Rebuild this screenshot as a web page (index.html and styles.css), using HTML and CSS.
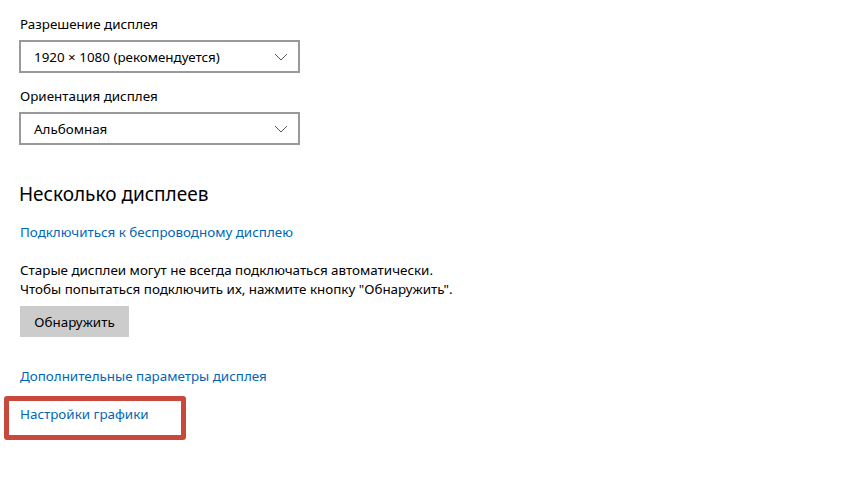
FILE: index.html
```html
<!DOCTYPE html>
<html>
<head>
<meta charset="utf-8">
<title>Дисплей</title>
<link rel="stylesheet" href="styles.css">
</head>
<body>

<div class="page">

	<div class="label lbl1">Разрешение дисплея</div>
	<div class="combo">
		<span>1920 × 1080 (рекомендуется)</span>
		<svg class="chev" width="14" height="8" viewBox="0 0 14 8"><path d="M1 1 L7 7 L13 1" fill="none" stroke="#555" stroke-width="1"/></svg>
	</div>

	<div class="label lbl2">Ориентация дисплея</div>
	<div class="combo">
		<span>Альбомная</span>
		<svg class="chev" width="14" height="8" viewBox="0 0 14 8"><path d="M1 1 L7 7 L13 1" fill="none" stroke="#555" stroke-width="1"/></svg>
	</div>

	<h2 class="hdr">Несколько дисплеев</h2>

	<a class="lnk lnk1" href="#">Подключиться к беспроводному дисплею</a>

	<p class="txt">Старые дисплеи могут не всегда подключаться автоматически.<br>
	Чтобы попытаться подключить их, нажмите кнопку "Обнаружить".</p>

	<div class="btn">Обнаружить</div>

	<a class="lnk lnk2" href="#">Дополнительные параметры дисплея</a>

	<div class="mark">
		<a class="lnk" href="#">Настройки графики</a>
	</div>

</div>

</body>
</html>
```

FILE: styles.css
```css
body {
	margin: 0px;
	padding: 0px;
	background-color: #FFF;
	font-family: "Noto Sans", "Open Sans", sans-serif;
	font-size: 13.4px;
	color: #000;
}

.page {
	display: flex;
	flex-direction: column;
	align-items: flex-start;
	padding: 14px 0px 0px 20px;
}

.label {
	line-height: 20px;
}

.lbl2 {
	margin-top: 13px;
}

.combo {
	box-sizing: border-box;
	width: 281px;
	height: 33px;
	margin: 6px 0px 0px -1px;
	padding: 0px 8px 0px 13px;
	border: 2px solid #999;
	display: flex;
	align-items: center;
	justify-content: space-between;
	color: #000;
}

.chev {
	margin-right: 2px;
}

.hdr {
	margin: 35px 0px 0px -1px;
	font-size: 19px;
	font-weight: normal;
	line-height: 28px;
}

.lnk {
	color: #0067b8;
	text-decoration: none;
	line-height: 20px;
}

.lnk1 {
	margin-top: 14px;
}

.txt {
	margin: 19px 0px 0px 0px;
	line-height: 19px;
}

.btn {
	margin-top: 7px;
	width: 109px;
	height: 31px;
	background-color: #ccc;
	display: flex;
	align-items: center;
	justify-content: center;
}

.lnk2 {
	margin-top: 29px;
}

.mark {
	box-sizing: border-box;
	margin: 10px 0px 0px -16px;
	width: 182px;
	height: 44px;
	border: 5px solid #c9483c;
	border-radius: 3px;
	padding: 3px 0px 0px 11px;
}
```
